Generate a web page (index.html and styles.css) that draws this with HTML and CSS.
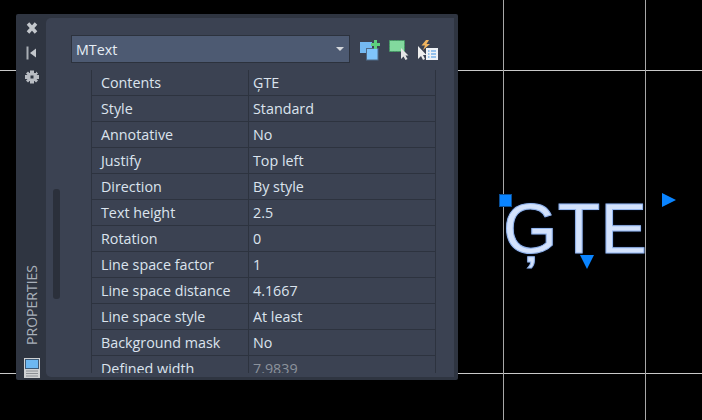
FILE: index.html
```html
<!DOCTYPE html>
<html>
    <head>
        <title>Properties - MText</title>
        <meta name="viewport" content="width=device-width, initial-scale=1.0">
        <link rel="stylesheet" href="styles.css">
    </head>
    <body>
        <!-- drawing canvas -->
        <div class="line hline line1"></div>
        <div class="line hline line2"></div>
        <div class="line vline line3"></div>
        <div class="line vline line4"></div>
        <div class="mtext">ĢTE</div>
        <div class="grip gripSquare"></div>
        <svg class="grip gripRight" width="14" height="14" viewBox="0 0 14 14"><path d="M0 0L14 7L0 14Z" fill="#0a84ff"/></svg>
        <svg class="grip gripDown" width="14" height="14" viewBox="0 0 14 14"><path d="M0 0H14L7 14Z" fill="#0a84ff"/></svg>

        <div class="panel">
            <div class="sidebar">
                <div class="sideIcons">
                    <svg width="14" height="14" viewBox="0 0 14 14"><path d="M3 2.500L11 11.500M11 2.500L3 11.500" stroke="#c3c7cc" stroke-width="3.4"/></svg>
                    <svg width="14" height="14" viewBox="0 0 14 14"><path d="M2.500 0.500V13.500" stroke="#a9aeb5" stroke-width="2"/><path d="M11 2.500V11.500L5 7Z" fill="#c3c7cc"/></svg>
                    <svg width="14" height="14" viewBox="0 0 14 14"><path d="M5 0.500H9V3H11V1.500L13 3.500L11.500 5H14V9H11.500L13 10.500L11 12.500L9.500 11H9V13.500H5V11H4.500L3 12.500L1 10.500L2.500 9H0V5H2.500L1 3.500L3 1.500L4.500 3H5Z" fill="#b9bdc3"/><rect x="5.500" y="5.500" width="3" height="3" fill="#333a46"/></svg>
                </div>
                <div class="sideTitle">PROPERTIES</div>
                <svg class="sideBottom" width="16" height="20" viewBox="0 0 16 20">
                    <rect width="16" height="20" fill="#cfd1d3"/>
                    <rect x="1.500" y="1.500" width="13" height="9" fill="#6db8f2" stroke="#3c5a78"/>
                    <path d="M2 13H14M2 15.500H14M2 18H14" stroke="#8a8e94"/>
                </svg>
            </div>
            <div class="content">
                <div class="topBar">
                    <div class="select">
                        <span>MText</span>
                        <div class="arrow"></div>
                    </div>
                    <svg class="tool" width="22" height="22" viewBox="0 0 22 22">
                        <rect x="1" y="3" width="12" height="11" fill="#74b9f2"/>
                        <rect x="7.500" y="9.500" width="11.500" height="11.500" fill="#80c4fa" stroke="#4f6a88"/>
                        <path d="M16.500 1V10M12 5.500H21" stroke="#5ccf7c" stroke-width="3"/>
                    </svg>
                    <svg class="tool" width="22" height="22" viewBox="0 0 22 22">
                        <rect x="1.500" y="1.500" width="15" height="11" fill="#82d99e" stroke="#3f9a60" stroke-dasharray="2 1"/>
                        <path d="M13 9V20L15.500 17.500L17.500 21L19.500 20L17.500 16.500H20.500Z" fill="#e4e4e4"/>
                    </svg>
                    <svg class="tool" width="22" height="22" viewBox="0 0 22 22">
                        <path d="M9 1L4.500 6.500H8L6 11L13 5H9.500L12 1Z" fill="#f0b45f"/>
                        <path d="M1 7V20L4 17L6 21L8 20L6 16H9.500Z" fill="#ededed"/>
                        <rect x="9" y="9" width="12" height="12" fill="#eef2f6"/>
                        <path d="M11 12H12.500M14 12H19M11 15H12.500M14 15H19M11 18H12.500M14 18H19" stroke="#3a8fe0"/>
                    </svg>
                </div>
                <div class="body">
                    <div class="scrollTrack"></div>
                    <div class="table">
                        <div class="row"><div class="label">Contents</div><div class="value">ĢTE</div></div>
                        <div class="row"><div class="label">Style</div><div class="value">Standard</div></div>
                        <div class="row"><div class="label">Annotative</div><div class="value">No</div></div>
                        <div class="row"><div class="label">Justify</div><div class="value">Top left</div></div>
                        <div class="row"><div class="label">Direction</div><div class="value">By style</div></div>
                        <div class="row"><div class="label">Text height</div><div class="value">2.5</div></div>
                        <div class="row"><div class="label">Rotation</div><div class="value">0</div></div>
                        <div class="row"><div class="label">Line space factor</div><div class="value">1</div></div>
                        <div class="row"><div class="label">Line space distance</div><div class="value">4.1667</div></div>
                        <div class="row"><div class="label">Line space style</div><div class="value">At least</div></div>
                        <div class="row"><div class="label">Background mask</div><div class="value">No</div></div>
                        <div class="row"><div class="label">Defined width</div><div class="value muted">7.9839</div></div>
                    </div>
                </div>
            </div>
        </div>
    </body>
</html>
```
FILE: styles.css
```css
*{
    margin: 0;
    padding: 0;
    box-sizing: border-box;
}

body{
    width: 702px;
    height: 420px;
    overflow: hidden;
    position: relative;
    background-color: #000;
    font-family: "Open Sans", sans-serif;
}

.line{
    position: absolute;
    background-color: #c9c9c9;
}

.hline{
    left: 0;
    width: 702px;
    height: 1px;
}

.vline{
    top: 0;
    width: 1px;
    height: 420px;
    background-color: #a8a8a8;
}

.line1{ top: 70px; }
.line2{ top: 373px; }
.line3{ left: 503px; }
.line4{ left: 645px; }

.mtext{
    position: absolute;
    left: 503px;
    top: 189px;
    font-family: "Liberation Sans", sans-serif;
    font-size: 70px;
    line-height: 80px;
    color: #d3e2fc;
    -webkit-text-stroke: 1px #94b6ee;
    text-shadow: 0 0 2px #1c3f80;
}

.grip{
    position: absolute;
}

.gripSquare{
    left: 499px;
    top: 194px;
    width: 13px;
    height: 13px;
    background-color: #0a84ff;
    border: 1px solid #0a4f96;
}

.gripRight{
    left: 662px;
    top: 193px;
}

.gripDown{
    left: 580px;
    top: 255px;
}

.panel{
    position: absolute;
    left: 16px;
    top: 14px;
    width: 442px;
    height: 366px;
    display: flex;
    background-color: #2f3541;
    border-radius: 2px;
    padding: 4px 4px 3px 0;
}

.sidebar{
    width: 30px;
    padding-left: 2px;
    display: flex;
    flex-direction: column;
    align-items: center;
}

.sideIcons{
    display: flex;
    flex-direction: column;
    align-items: center;
    gap: 10.500px;
    margin-top: 3px;
}

.sideTitle{
    margin-top: auto;
    writing-mode: vertical-rl;
    transform: rotate(180deg);
    font-size: 14px;
    color: #a9b0ba;
    line-height: 14px;
}

.sideBottom{
    margin-top: 13px;
    margin-bottom: -1px;
    flex-shrink: 0;
}

.content{
    flex: 1;
    background-color: #3b4252;
    border-radius: 5px 0 0 5px;
    display: flex;
    flex-direction: column;
    overflow: hidden;
}

.topBar{
    height: 52px;
    display: flex;
    align-items: flex-start;
    padding: 17px 0 0 25px;
    flex-shrink: 0;
}

.select{
    width: 279px;
    height: 28px;
    background-color: #4d5a72;
    border: 1px solid #2c323d;
    display: flex;
    align-items: center;
    justify-content: space-between;
    padding: 0 4px;
    color: #e6edf5;
    font-size: 14.300px;
    margin-right: 9px;
}

.arrow{
    width: 0;
    height: 0;
    border-left: 4px solid transparent;
    border-right: 4px solid transparent;
    border-top: 4px solid #d5d8dc;
    margin-right: 1px;
}

.tool{
    margin-right: 7px;
    margin-top: 4px;
}

.body{
    flex: 1;
    display: flex;
    min-height: 0;
}

.scrollTrack{
    width: 7px;
    height: 110px;
    margin: 119px 0 0 7px;
    background-color: #2b303b;
    border-radius: 3px;
}

.table{
    width: 345px;
    margin-left: 31px;
    border-left: 1px solid #2d333f;
    border-right: 1px solid #2d333f;
    height: 303px;
    overflow: hidden;
}

.row{
    height: 26px;
    display: flex;
    border-bottom: 1px solid #2d333f;
    font-size: 14.300px;
    line-height: 25px;
    color: #dbe4ee;
}

.row:last-child{
    border-bottom: none;
}

.label{
    width: 157px;
    padding-left: 9px;
    border-right: 1px solid #2d333f;
}

.value{
    flex: 1;
    padding-left: 4px;
}

.muted{
    color: #8c929c;
}
```
